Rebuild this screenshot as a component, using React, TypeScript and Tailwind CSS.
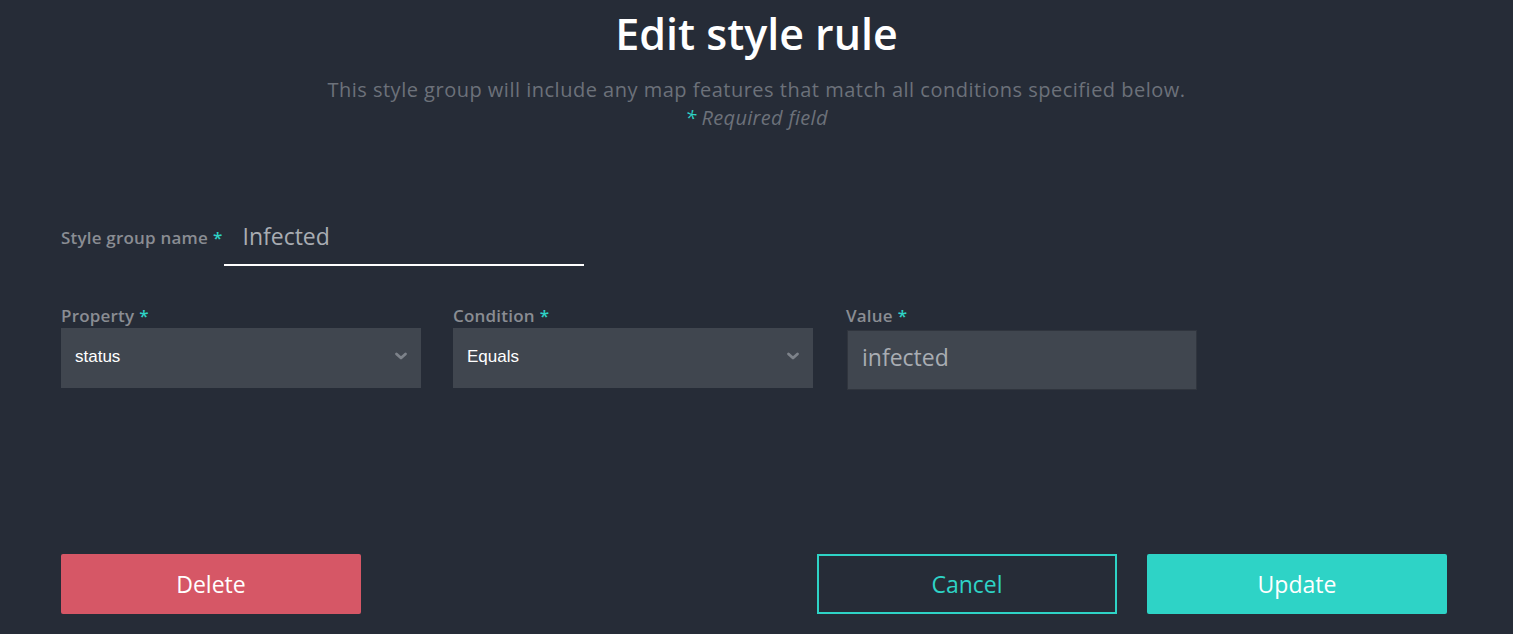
import { useState } from "react";

const font = { fontFamily: '"Open Sans", "Noto Sans", sans-serif' };

function Req() {
	return <span className="text-[#2ed3c6] ml-[5px]">*</span>;
}

function Chevron() {
	return (
		<svg width="14" height="9" viewBox="0 0 14 9" className="absolute right-[13px] top-[24px]">
			<path d="M2.5 2 L7 6 L11.5 2" stroke="#7d828a" strokeWidth="2.8" fill="none" strokeLinecap="round" strokeLinejoin="round" />
		</svg>
	);
}

function SelectBox({ label, value }: { label: string; value: string }) {
	return (
		<div className="w-[360px]">
			<p className="text-[17px] font-semibold text-[#8a8d93] leading-[20px] tracking-[0.2px] mb-[2px]">
				{label}<Req />
			</p>
			<div className="relative h-[60px] bg-[#40464f]">
				<span className="absolute left-[14px] top-[16px] text-[17px] text-white" style={{ fontFamily: '"Liberation Sans", Arial, sans-serif' }}>
					{value}
				</span>
				<Chevron />
			</div>
		</div>
	);
}

export default function App() {
	const [name] = useState("Infected");

	return (
		<div className="w-[1513px] h-[634px] bg-[#262c37] overflow-hidden" style={font}>
			<div className="pt-[6px] text-center">
				<h1 className="text-[43px] font-semibold text-white leading-[56px]">Edit style rule</h1>
				<p className="mt-[14px] text-[20px] tracking-[0.5px] text-[#6c717a] leading-[28px]">
					This style group will include any map features that match all conditions specified below.
				</p>
				<p className="text-[20px] italic tracking-[0.3px] text-[#6c717a] leading-[28px]">
					<span className="text-[#2ed3c6] mr-[5px]">*</span>Required field
				</p>
			</div>

			<div className="px-[61px]">
				<div className="mt-[84px] flex items-end">
					<p className="text-[17px] font-semibold text-[#8a8d93] leading-[20px] tracking-[0.2px] pb-[18px]">
						Style group name<Req />
					</p>
					<div className="ml-[2px] w-[360px] h-[50px] border-b-2 border-white flex items-start pl-[18px]">
						<span className="mt-[3px] text-[23px] text-[#a9adb3] leading-[34px]">{name}</span>
					</div>
				</div>

				<div className="mt-[40px] flex">
					<SelectBox label="Property" value="status" />
					<div className="ml-[32px]">
						<SelectBox label="Condition" value="Equals" />
					</div>
					<div className="ml-[33px] w-[351px]">
						<p className="text-[17px] font-semibold text-[#8a8d93] leading-[20px] tracking-[0.2px] mb-[4px]">
							Value<Req />
						</p>
						<div className="ml-[1px] h-[60px] bg-[#40464f] border border-[#30353e] flex items-center pl-[14px] pb-[5px]">
							<span className="text-[23px] text-[#a9adb3]">infected</span>
						</div>
					</div>
				</div>

				<div className="mt-[164px] flex">
					<button className="w-[300px] h-[60px] bg-[#d65766] rounded-[2px] text-white text-[23px]">Delete</button>
					<div className="flex-1" />
					<button className="w-[300px] h-[60px] border-2 border-[#2ed3c6] text-[#2ed3c6] text-[23px]">Cancel</button>
					<button className="ml-[30px] mr-[5px] w-[300px] h-[60px] bg-[#2ed3c6] rounded-[2px] text-white text-[23px]">Update</button>
				</div>
			</div>
		</div>
	);
}
